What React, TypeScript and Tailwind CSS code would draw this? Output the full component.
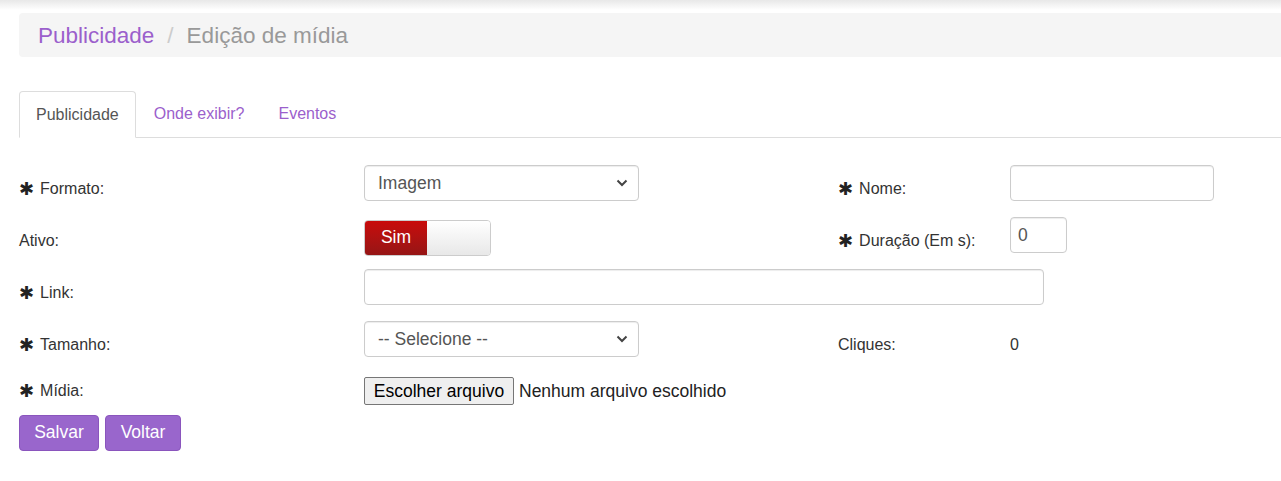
const font = "font-['Liberation_Sans',Arial,sans-serif]";

function Req() {
  return <span className="mr-[6px] font-['DejaVu_Sans',sans-serif] text-[18px] leading-[22px] text-[#222]">✱</span>;
}

function Chevron() {
  return (
    <svg width="12" height="8" viewBox="0 0 12 8" className="text-[#444]">
      <polyline points="1.5,1.5 6,6 10.5,1.5" fill="none" stroke="currentColor" strokeWidth="2" />
    </svg>
  );
}

function FakeSelect({ value }: { value: string }) {
  return (
    <div className="flex h-9 w-[275px] items-center justify-between rounded border border-[#ccc] bg-white pl-[13px] pr-[10px] text-[17.5px] text-[#555] shadow-[inset_0_1px_1px_rgba(0,0,0,0.075)]">
      <span>{value}</span>
      <Chevron />
    </div>
  );
}

function Label({ children, centered }: { children: React.ReactNode; centered?: boolean }) {
  return (
    <div className={centered ? "flex items-center text-[16px] leading-[22px] text-[#333]" : "flex items-start pt-[13px] text-[16px] leading-[22px] text-[#333]"}>
      {children}
    </div>
  );
}

export default function App() {
  return (
    <div className={`${font} min-h-[481px] w-[1281px] overflow-hidden bg-white text-[#333]`}>
      <div className="h-[10px] bg-gradient-to-b from-[#e8e8e8] to-white" />

      <div className="ml-[19px] mt-[3px] flex h-[44px] items-center rounded-l bg-[#f5f5f5] pl-[19px] pt-[2px] text-[22.5px]">
        <span className="text-[#9b5fcc]">Publicidade</span>
        <span className="mx-[13px] text-[#ccc]">/</span>
        <span className="text-[#999]">Edição de mídia</span>
      </div>

      <div className="ml-[19px] mt-[34px] flex h-[47px] items-end border-b border-[#ddd] text-[16px]">
        <div className="-mb-px flex h-[47px] items-center rounded-t border border-[#ddd] border-b-white bg-white px-4 text-[#555]">
          Publicidade
        </div>
        <div className="ml-[2px] flex h-[46px] items-center px-4 text-[#9b5fcc]">Onde exibir?</div>
        <div className="ml-[2px] flex h-[46px] items-center px-4 text-[#9b5fcc]">Eventos</div>
      </div>

      <div className="ml-[19px] mt-[27px] grid grid-cols-[345px_474px_172px_1fr] gap-y-4">
        <Label><Req />Formato:</Label>
        <div className="h-9"><FakeSelect value="Imagem" /></div>
        <Label><Req />Nome:</Label>
        <div className="h-9 w-[204px] rounded border border-[#ccc] shadow-[inset_0_1px_1px_rgba(0,0,0,0.075)]" />

        <Label>Ativo:</Label>
        <div className="h-9">
          <div className="mt-[3px] flex h-9 w-[127px] overflow-hidden rounded border border-[#ccc]">
            <div className="flex w-[62px] items-center justify-center bg-gradient-to-b from-[#c90a0a] to-[#961515] pb-[2px] text-[17.5px] text-white">
              Sim
            </div>
            <div className="flex-1 bg-gradient-to-b from-white to-[#e8e8e8]" />
          </div>
        </div>
        <Label><Req />Duração (Em s):</Label>
        <div className="flex h-9 w-[57px] items-start rounded border border-[#ccc] px-[7px] pt-[4px] text-[17.5px] text-[#555] shadow-[inset_0_1px_1px_rgba(0,0,0,0.075)]">
          0
        </div>

        <Label><Req />Link:</Label>
        <div className="col-span-3 h-9">
          <div className="h-9 w-[680px] rounded border border-[#ccc] shadow-[inset_0_1px_1px_rgba(0,0,0,0.075)]" />
        </div>

        <Label><Req />Tamanho:</Label>
        <div className="h-9"><FakeSelect value="-- Selecione --" /></div>
        <Label>Cliques:</Label>
        <Label>0</Label>

        <Label centered><Req />Mídia:</Label>
        <div className="col-span-3 flex h-9 items-center text-[17.5px] text-[#222]">
          <div className="flex h-[28px] w-[150px] items-center justify-center rounded-[2px] border border-[#767676] bg-[#efefef] text-black">
            Escolher arquivo
          </div>
          <span className="ml-[5px]">Nenhum arquivo escolhido</span>
        </div>
      </div>

      <div className="ml-[19px] mt-[6px] flex gap-[6px] text-[17.5px]">
        <button className="h-9 w-[80px] rounded border border-[#8a55bd] bg-[#9966cc] pb-[1px] text-white">Salvar</button>
        <button className="h-9 w-[76px] rounded border border-[#8a55bd] bg-[#9966cc] pb-[1px] text-white">Voltar</button>
      </div>
    </div>
  );
}
